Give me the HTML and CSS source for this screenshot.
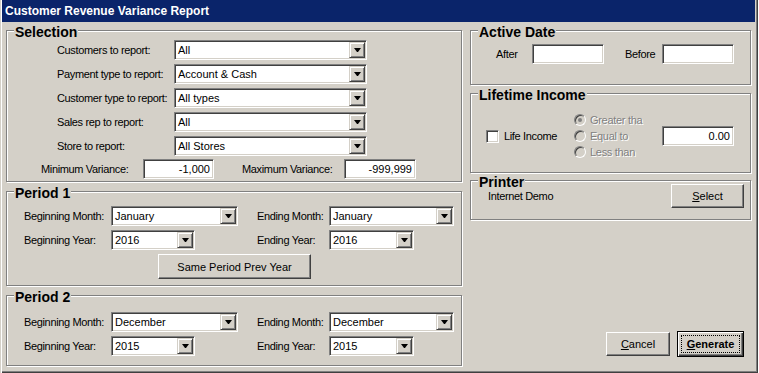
FILE: index.html
```html
<!DOCTYPE html>
<html lang="en">
<head>
  <meta charset="UTF-8">
  <title>Customer Revenue Variance Report</title>
  <link rel="stylesheet" href="styles.css">
</head>
<body>
  <div class="window">
    <div class="titlebar">Customer Revenue Variance Report</div>
    <div class="client">
      <div class="col">
        <div class="group sel">
          <div class="gtitle">Selection</div>
          <div class="row srow first"><span class="lbl sl">Customers to report:</span><div class="combo cs"><span class="val">All</span><i class="arrow"></i></div></div>
          <div class="row srow"><span class="lbl sl">Payment type to report:</span><div class="combo cs"><span class="val">Account &amp; Cash</span><i class="arrow"></i></div></div>
          <div class="row srow"><span class="lbl sl">Customer type to report:</span><div class="combo cs"><span class="val">All types</span><i class="arrow"></i></div></div>
          <div class="row srow"><span class="lbl sl">Sales rep to report:</span><div class="combo cs"><span class="val">All</span><i class="arrow"></i></div></div>
          <div class="row srow"><span class="lbl sl">Store to report:</span><div class="combo cs"><span class="val">All Stores</span><i class="arrow"></i></div></div>
          <div class="row vrow">
            <span class="lbl vl">Minimum Variance:</span><div class="field vmin">-1,000</div>
            <span class="lbl vl vl2">Maximum Variance:</span><div class="field vmax">-999,999</div>
          </div>
        </div>

        <div class="group per p1">
          <div class="gtitle">Period 1</div>
          <div class="row prow first">
            <span class="lbl pl">Beginning Month:</span><div class="combo cm"><span class="val">January</span><i class="arrow"></i></div>
            <span class="lbl el">Ending Month:</span><div class="combo cm2"><span class="val">January</span><i class="arrow"></i></div>
          </div>
          <div class="row prow">
            <span class="lbl pl">Beginning Year:</span><div class="combo cy"><span class="val">2016</span><i class="arrow"></i></div>
            <span class="lbl el ey">Ending Year:</span><div class="combo cy2"><span class="val">2016</span><i class="arrow"></i></div>
          </div>
          <div class="row brow"><button class="btn same">Same Period Prev Year</button></div>
        </div>

        <div class="group per p2">
          <div class="gtitle">Period 2</div>
          <div class="row prow first">
            <span class="lbl pl">Beginning Month:</span><div class="combo cm"><span class="val">December</span><i class="arrow"></i></div>
            <span class="lbl el">Ending Month:</span><div class="combo cm2"><span class="val">December</span><i class="arrow"></i></div>
          </div>
          <div class="row prow">
            <span class="lbl pl">Beginning Year:</span><div class="combo cy"><span class="val">2015</span><i class="arrow"></i></div>
            <span class="lbl el ey">Ending Year:</span><div class="combo cy2"><span class="val">2015</span><i class="arrow"></i></div>
          </div>
        </div>
      </div>

      <div class="col right">
        <div class="group active">
          <div class="gtitle">Active Date</div>
          <div class="row arow">
            <span class="lbl al">After</span><div class="field dt"></div>
            <span class="lbl al bl">Before</span><div class="field dt"></div>
          </div>
        </div>

        <div class="group life">
          <div class="gtitle">Lifetime Income</div>
          <div class="row lrow">
            <span class="check"></span><span class="lbl cl">Life Income</span>
            <div class="radios">
              <div class="radio on"><span class="rb"></span><span class="dis">Greater tha</span></div>
              <div class="radio"><span class="rb"></span><span class="dis">Equal to</span></div>
              <div class="radio"><span class="rb"></span><span class="dis">Less than</span></div>
            </div>
            <div class="field amt">0.00</div>
          </div>
        </div>

        <div class="group printer">
          <div class="gtitle">Printer</div>
          <div class="row prrow">
            <span class="lbl">Internet Demo</span>
            <button class="btn sel-btn"><u>S</u>elect</button>
          </div>
        </div>

        <div class="actions">
          <button class="btn cancel"><u>C</u>ancel</button>
          <button class="btn default"><span class="focus"><u>G</u>enerate</span></button>
        </div>
      </div>
    </div>
  </div>
</body>
</html>
```

FILE: styles.css
```css
* {
  box-sizing: border-box;
}
body {
  margin: 0;
  background: #fff;
  font-family: "Liberation Sans", Arial, sans-serif;
  font-size: 11px;
  color: #000;
}
.window {
  width: 758px;
  height: 373px;
  padding: 0 3px 0 2px;
  background: #d4d0c8;
  box-shadow: inset 1px 0 #d4d0c8, inset 2px 0 #fff, inset -1px -1px #404040, inset -2px -2px #808080;
}
.titlebar {
  height: 22px;
  line-height: 22px;
  padding-left: 3px;
  background: #0a246a;
  color: #fff;
  font-weight: bold;
  font-size: 12px;
}
.client {
  display: grid;
  grid-template-columns: 456px 281px;
  column-gap: 8px;
  padding-left: 4px;
}
.col {
  display: flex;
  flex-direction: column;
}

/* etched group box */
.group {
  border: 1px solid #808080;
  box-shadow: inset 1px 1px #fff, 1px 1px #fff;
  margin-top: 9px;
}
.gtitle {
  margin: -6px 0 0 7px;
  padding: 0 1px;
  display: table;
  background: #d4d0c8;
  font-size: 14px;
  font-weight: bold;
  line-height: 14px;
  height: 14px;
}
.group.sel,
.group.active {
  margin-top: 8px;
}
.row {
  display: flex;
  align-items: center;
  height: 20px;
}
.lbl {
  white-space: nowrap;
  letter-spacing: -0.35px;
}

/* selection */
.sel {
  padding-bottom: 2px;
}
.srow {
  margin-top: 4px;
  padding-left: 50px;
}
.srow.first {
  margin-top: 1px;
}
.sl {
  width: 117px;
}
.cs {
  width: 193px;
}
.vrow {
  margin-top: 3px;
  padding-left: 34px;
}
.vl {
  width: 102px;
}
.vl2 {
  margin-left: 28px;
}
.vmin {
  width: 71px;
}
.vmax {
  width: 72px;
}

/* periods */
.per .prow {
  margin-top: 4px;
  padding-left: 17px;
}
.per .prow.first {
  margin-top: 6px;
}
.p2 .prow.first {
  margin-top: 8px;
}
.p1 {
  padding-bottom: 6px;
}
.p2 {
  padding-bottom: 9px;
}
.pl {
  width: 87px;
}
.cm {
  width: 127px;
}
.cm2 {
  width: 125px;
}
.cy {
  width: 84px;
  margin-right: 43px;
}
.cy2 {
  width: 85px;
}
.el {
  width: 72px;
  margin-left: 19px;
}
.brow {
  height: 25px;
  margin-top: 4px;
  padding-left: 151px;
}
.same {
  width: 153px;
  height: 25px;
}

/* combo and fields */
.combo {
  display: flex;
  height: 20px;
  padding: 1px;
  background: #fff;
  border: 1px solid;
  border-color: #808080 #fff #fff #808080;
  box-shadow: inset 1px 1px #404040, inset -1px -1px #d4d0c8;
}
.combo .val {
  flex: 1;
  padding-left: 2px;
  line-height: 16px;
}
.arrow {
  width: 16px;
  display: flex;
  align-items: center;
  justify-content: center;
  background: #d4d0c8;
  border: 1px solid;
  border-color: #d4d0c8 #404040 #404040 #d4d0c8;
  box-shadow: inset 1px 1px #fff, inset -1px -1px #808080;
}
.arrow::after {
  content: "";
  width: 1px;
  height: 0;
  border-top: 4px solid #000;
  border-left: 3px solid transparent;
  border-right: 3px solid transparent;
}
.field {
  height: 20px;
  padding: 0 3px;
  line-height: 18px;
  text-align: right;
  background: #fff;
  border: 1px solid;
  border-color: #808080 #fff #fff #808080;
  box-shadow: inset 1px 1px #404040, inset -1px -1px #d4d0c8;
}

/* buttons */
.btn {
  display: flex;
  align-items: center;
  justify-content: center;
  padding: 0;
  font-family: "Liberation Sans", Arial, sans-serif;
  font-size: 11px;
  color: #000;
  background: #d4d0c8;
  border: 1px solid;
  border-color: #fff #404040 #404040 #fff;
  box-shadow: inset -1px -1px #808080;
}

/* right column */
.active {
  padding-bottom: 20px;
}
.arow {
  margin-top: 5px;
  padding-left: 25px;
}
.al {
  width: 36px;
}
.bl {
  width: 37px;
  margin-left: 21px;
}
.dt {
  width: 72px;
}
.life {
  margin-top: 8px;
  padding-bottom: 12px;
}
.lrow {
  height: 48px;
  margin-top: 10px;
  padding-left: 15px;
}
.check {
  width: 13px;
  height: 13px;
  background: #fff;
  border: 1px solid;
  border-color: #808080 #fff #fff #808080;
  box-shadow: inset 1px 1px #404040, inset -1px -1px #d4d0c8;
}
.cl {
  margin-left: 5px;
  width: 70px;
}
.radios {
  display: flex;
  flex-direction: column;
}
.radio {
  display: flex;
  align-items: center;
  height: 16px;
  letter-spacing: -0.3px;
}
.rb {
  width: 12px;
  height: 12px;
  margin-right: 4px;
  border-radius: 50%;
  background: #d4d0c8;
  border: 1px solid;
  border-color: #808080 #fff #fff #808080;
  box-shadow: inset 1px 1px #404040;
  display: flex;
  align-items: center;
  justify-content: center;
}
.radio.on .rb::after {
  content: "";
  width: 4px;
  height: 4px;
  border-radius: 50%;
  background: #808080;
}
.dis {
  color: #808080;
  text-shadow: 1px 1px #fff;
}
.amt {
  width: 72px;
  margin-left: auto;
  margin-right: 16px;
}
.printer {
  margin-top: 7px;
  padding: 0 6px 11px 17px;
}
.printer .gtitle {
  margin-left: -10px;
}
.prrow {
  height: 24px;
  margin-top: -5px;
}
.sel-btn {
  width: 73px;
  height: 24px;
  margin-left: auto;
}
.actions {
  display: flex;
  align-items: center;
  justify-content: flex-end;
  gap: 7px;
  margin-top: 111px;
  padding-right: 7px;
}
.cancel {
  width: 64px;
  height: 24px;
}
.default {
  width: 67px;
  height: 26px;
  border: 1px solid #000;
  box-shadow: inset 1px 1px #fff, inset -1px -1px #404040, inset -2px -2px #808080;
  font-weight: bold;
}
.focus {
  flex: 1;
  align-self: stretch;
  margin: 3px;
  display: flex;
  align-items: center;
  justify-content: center;
  border: 1px dotted #000;
}
```
